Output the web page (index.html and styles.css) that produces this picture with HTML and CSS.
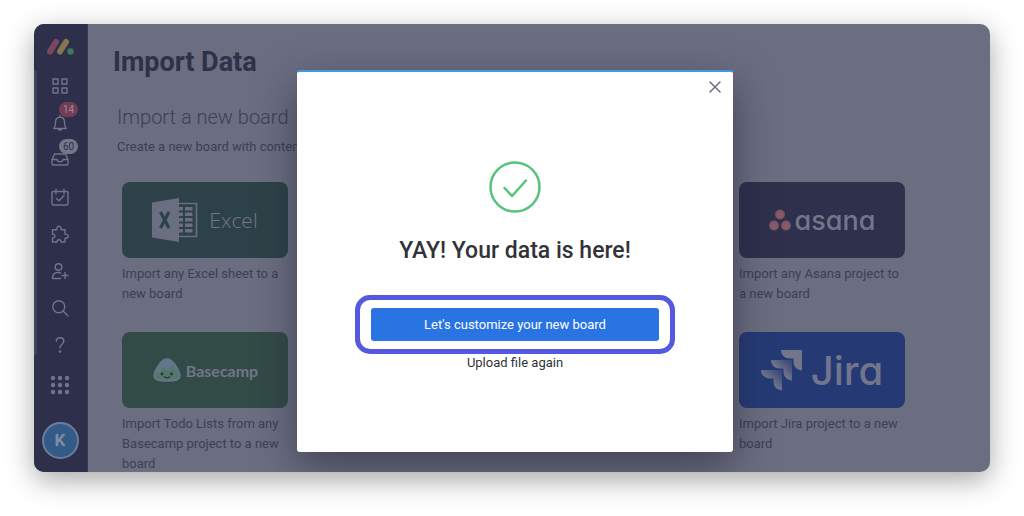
FILE: index.html
```html
<!DOCTYPE html>
<html lang="en">
<head>
    <meta charset="UTF-8">
    <meta name="viewport" content="width=device-width, initial-scale=1.0">
    <title>Import Data</title>
    <link rel="stylesheet" href="styles.css">
</head>
<body>
    <div class="app">
        <nav class="sidebar">
            <a href="#" class="logo" aria-label="Home">
                <svg width="28" height="18" viewBox="0 0 28 18" stroke-width="6" stroke-linecap="round">
                    <path d="M4 13.500L10 4" stroke="#7d4660"/>
                    <path d="M14 13.500L20 4" stroke="#85764f"/>
                    <circle cx="24.500" cy="13.500" r="3.200" fill="#3f7a5c"/>
                </svg>
            </a>
            <a href="#" class="nav-item" aria-label="Workspaces">
                <svg class="icon" viewBox="0 0 18 18"><path d="M2 2h5v5H2zM11 2h5v5h-5zM2 11h5v5H2zM11 11h5v5h-5z"/></svg>
            </a>
            <a href="#" class="nav-item" aria-label="Notifications">
                <svg class="icon" viewBox="0 0 18 18"><path d="M2.800 14.500h12.400c-1.500-1.600-1.700-3-1.700-6.200C13.500 5 11.800 3.200 9 3.200S4.500 5 4.500 8.300c0 3.200-.2 4.600-1.700 6.200zM9 3V1.500M7.300 15c.3 1.700 3.100 1.700 3.400 0"/></svg>
                <span class="badge badge-red">14</span>
            </a>
            <a href="#" class="nav-item" aria-label="Inbox">
                <svg class="icon" viewBox="0 0 18 18"><path d="M1 8.500L3.500 3h11L17 8.500v4q0 1.500-1.500 1.500h-13Q1 14 1 12.500zM1 8.500h5c.3 3 5.700 3 6 0h5"/></svg>
                <span class="badge badge-grey">60</span>
            </a>
            <a href="#" class="nav-item" aria-label="My week">
                <svg class="icon" viewBox="0 0 18 18"><path d="M2.500 3.500h13q1.500 0 1.500 1.500v10.500q0 1.500-1.500 1.500h-13Q1 17 1 15.500V5q0-1.500 1.500-1.500zM5 1.200v4.500M13 1.200v4.500M5.500 10.500l2.500 2.300 5-5.300"/></svg>
            </a>
            <a href="#" class="nav-item" aria-label="Apps">
                <svg class="icon" viewBox="0 0 18 18"><path d="M1.500 4.800h4.300C5.300 0 10.700 0 10.200 4.800H14v4.400c4.400-.4 4.400 4.400 0 4v3.800h-3.800c.2-3-4.200-3-4.300 0H1.500v-4c3.300.2 3.300-4.100 0-3.800z"/></svg>
            </a>
            <a href="#" class="nav-item" aria-label="Invite">
                <svg class="icon" viewBox="0 0 18 18"><circle cx="7.500" cy="5" r="3.300"/><path d="M9.500 16.500H1.500c0-4.500 2.500-6 5.500-6 1.300 0 2.100.2 2.800.6M14 10.500v6M11 13.500h6"/></svg>
            </a>
            <a href="#" class="nav-item" aria-label="Search">
                <svg class="icon" viewBox="0 0 18 18"><circle cx="7.800" cy="7.800" r="6"/><path d="M12.300 12.300l4.500 4.500"/></svg>
            </a>
            <a href="#" class="nav-item" aria-label="Help">
                <svg class="icon" viewBox="0 0 18 18"><path d="M5.300 5.200C5.300 2.800 7 1.700 9 1.700s3.800 1.300 3.800 3.400c0 3-3.800 3.300-3.800 6.700"/><circle cx="9" cy="15.500" r=".6"/></svg>
            </a>
            <a href="#" class="nav-item products" aria-label="Products">
                <svg width="20" height="20" viewBox="0 0 20 20" fill="#72748a">
                    <circle cx="3" cy="3" r="2.200"/><circle cx="10" cy="3" r="2.200"/><circle cx="17" cy="3" r="2.200"/>
                    <circle cx="3" cy="10" r="2.200"/><circle cx="10" cy="10" r="2.200"/><circle cx="17" cy="10" r="2.200"/>
                    <circle cx="3" cy="17" r="2.200"/><circle cx="10" cy="17" r="2.200"/><circle cx="17" cy="17" r="2.200"/>
                </svg>
            </a>
            <a href="#" class="avatar">K</a>
        </nav>

        <main class="content">
            <h1>Import Data</h1>
            <h2>Import a new board</h2>
            <p class="intro">Create a new board with content</p>

            <div class="sources">
                <a href="#" class="source">
                    <div class="tile excel">
                        <svg width="46" height="44" viewBox="0 0 46 44">
                            <path d="M27 5.500h17.500v33H27" fill="none" stroke="#6b6d80" stroke-width="1.600"/>
                            <path d="M27 9h4v3.500h-4zM33 9h7.500v3.500H33zM27 14.500h4V18h-4zM33 14.500h7.500V18H33zM27 20h4v3.500h-4zM33 20h7.500v3.500H33zM27 25.500h4V29h-4zM33 25.500h7.500V29H33zM27 31h4v3.500h-4zM33 31h7.500v3.500H33z" fill="#6b6d80"/>
                            <path d="M0 4.500L27 0v44L0 39.500z" fill="#6b6d80"/>
                            <path d="M8.500 14l8.500 16M17 14L8.500 30" fill="none" stroke="#2d4248" stroke-width="3.200"/>
                        </svg>
                        <span>Excel</span>
                    </div>
                    <p>Import any Excel sheet to a new board</p>
                </a>
                <a href="#" class="source">
                    <div class="tile asana">
                        <svg width="22" height="22" viewBox="0 0 22 22">
                            <defs>
                                <radialGradient id="dot" cx=".5" cy=".6" r=".6">
                                    <stop offset="0" stop-color="#866060"/>
                                    <stop offset="1" stop-color="#80506c"/>
                                </radialGradient>
                            </defs>
                            <g fill="url(#dot)"><circle cx="11" cy="5.500" r="4.900"/><circle cx="5" cy="16.500" r="4.900"/><circle cx="17" cy="16.500" r="4.900"/></g>
                        </svg>
                        <span>asana</span>
                    </div>
                    <p>Import any Asana project to a new board</p>
                </a>
                <a href="#" class="source">
                    <div class="tile basecamp">
                        <svg width="30" height="24" viewBox="0 0 30 24">
                            <path d="M15 1.200C20 1.200 25.500 9 27.600 16.500 29 22 22 22.800 15 22.800S1 22 2.400 16.500C4.500 9 10 1.200 15 1.200z" fill="#537768" stroke="#65768a" stroke-width="2"/>
                            <path d="M3 14C5 8 10 2 15 2c4 0 9 6 11 12l-5.500-7-5 5.500L12 9l-5 6-2.500-1.500z" fill="#65768a"/>
                            <circle cx="10" cy="16" r="1.400" fill="#273342"/><circle cx="19.500" cy="16" r="1.400" fill="#273342"/>
                            <path d="M12 18.200c1 2.200 5 2.200 6 0" fill="none" stroke="#273342" stroke-width="1.200"/>
                        </svg>
                        <span>Basecamp</span>
                    </div>
                    <p>Import Todo Lists from any Basecamp project to a new board</p>
                </a>
                <a href="#" class="source">
                    <div class="tile jira">
                        <svg width="42" height="42" viewBox="0 0 42 42">
                            <defs>
                                <linearGradient id="fold" x1="1" y1="0" x2=".3" y2=".7">
                                    <stop offset=".2" stop-color="#3d4d7a"/>
                                    <stop offset=".8" stop-color="#73768a"/>
                                </linearGradient>
                            </defs>
                            <path d="M20 1h20q1 0 1 1v19.500c-5-.5-8.500-4-8.500-9v-3h-3.500c-5 0-9-3.500-9-8.500z" fill="#73768a"/>
                            <path d="M10 11h19q2 0 2 1v19.500c-5-.5-8.500-4-8.500-9v-3H19c-5 0-9-3.500-9-8.500z" fill="url(#fold)"/>
                            <path d="M0 21h19q2 0 2 1v19.500c-5-.5-8.500-4-8.500-9v-3H9c-5 0-9-3.500-9-8.500z" fill="url(#fold)"/>
                        </svg>
                        <span>Jira</span>
                    </div>
                    <p>Import Jira project to a new board</p>
                </a>
            </div>
        </main>

        <div class="overlay">
            <div class="modal" role="dialog" aria-labelledby="modal-title">
                <button class="close" aria-label="Close">
                    <svg width="12" height="12" viewBox="0 0 12 12"><path d="M1 1l10 10M11 1L1 11" stroke="#6b6d80" stroke-width="1.500" stroke-linecap="round"/></svg>
                </button>
                <svg class="success" width="52" height="52" viewBox="0 0 52 52">
                    <circle cx="26" cy="26" r="24.500"/>
                    <path d="M15.500 27l7.500 8L37 19.500"/>
                </svg>
                <h3 id="modal-title">YAY! Your data is here!</h3>
                <div class="highlight">
                    <button class="primary">Let's customize your new board</button>
                </div>
                <a href="#" class="again">Upload file again</a>
            </div>
        </div>
    </div>
</body>
</html>
```

FILE: styles.css
```css
* {
    margin: 0;
    padding: 0;
    box-sizing: border-box;
}
body {
    background: #fff;
    padding: 24px 34px 44px;
    font-family: Roboto, "Liberation Sans", sans-serif;
    font-size: 13px;
    line-height: 20px;
}
a {
    color: inherit;
    text-decoration: none;
}
.app {
    position: relative;
    display: flex;
    height: calc(100vh - 68px);
    border-radius: 10px;
    overflow: hidden;
    background: #6b6d80;
    box-shadow: 0 8px 28px rgba(0, 0, 0, 0.35);
}

/* sidebar */
.sidebar {
    position: relative;
    flex: 0 0 54px;
    display: flex;
    flex-direction: column;
    align-items: center;
    background: #2d2f4b;
    border-right: 1px solid #3a3c57;
    padding: 14px 1px 0 0;
}
.sidebar::before {
    content: "";
    position: absolute;
    left: 0;
    top: 46px;
    width: 3px;
    height: 285px;
    background: #404260;
    border-radius: 0 2px 2px 0;
}
.logo {
    height: 29px;
}
.logo svg,
.nav-item svg {
    display: block;
}
.nav-item {
    position: relative;
    display: flex;
    align-items: center;
    height: 37px;
}
.products {
    height: 44px;
}
.icon {
    width: 18px;
    height: 18px;
    fill: none;
    stroke: #72748a;
    stroke-width: 1.4;
    stroke-linecap: round;
    stroke-linejoin: round;
}
.badge {
    position: absolute;
    left: 8px;
    top: -2px;
    height: 15px;
    padding: 0 4px;
    border-radius: 8px;
    font-size: 10px;
    line-height: 15px;
}
.badge-red {
    background: #753d55;
    color: #9a8a9c;
}
.badge-grey {
    background: #74768a;
    color: #2d2f4b;
}
.avatar {
    width: 37px;
    height: 37px;
    margin-top: 15px;
    border: 2px solid #6b7d98;
    border-radius: 50%;
    background: #345a87;
    color: #7d8ca8;
    font-size: 17px;
    font-weight: 700;
    line-height: 33px;
    text-align: center;
}

/* page */
.content {
    flex: 1;
    padding: 22px 85px 0 34px;
    color: #3d3f57;
}
h1 {
    margin-left: -9px;
    font-size: 27px;
    font-weight: 700;
    line-height: 32px;
    color: #2f3149;
}
h2 {
    margin: 27px 0 0 -5px;
    font-size: 20px;
    font-weight: 300;
    line-height: 24px;
}
.intro {
    margin: 8px 0 25px -5px;
}
.sources {
    display: grid;
    grid-template-columns: 166px 166px;
    justify-content: space-between;
    gap: 28px;
}
.tile {
    display: flex;
    align-items: center;
    justify-content: center;
    height: 76px;
    margin-bottom: 6px;
    border-radius: 8px;
    color: #73768a;
}
.excel {
    gap: 11px;
    background: #2d4248;
    font: 300 21px "Open Sans", sans-serif;
}
.asana {
    gap: 4px;
    background: #2e304c;
    font: 500 27px Inter, sans-serif;
}
.basecamp {
    gap: 4px;
    background: #324b47;
    font: 700 16px Lato, sans-serif;
}
.jira {
    gap: 8px;
    background: #253a75;
    font: 500 40px Inter, sans-serif;
}
/* single-storey a */
.asana,
.jira {
    font-feature-settings: "cv11";
}

/* dialog */
.overlay {
    position: absolute;
    inset: 0;
    display: flex;
    justify-content: center;
    align-items: flex-start;
    padding: 46px 0 0 6px;
}
.modal {
    position: relative;
    display: flex;
    flex-direction: column;
    align-items: center;
    width: 436px;
    padding: 89px 0 80px;
    border-top: 2px solid #3d9be0;
    border-radius: 3px;
    background: #fff;
    color: #323338;
    box-shadow: 0 14px 40px rgba(30, 30, 50, 0.55);
}
.close {
    position: absolute;
    top: 9px;
    right: 12px;
    display: flex;
    border: none;
    background: none;
    cursor: pointer;
}
.success {
    fill: none;
    stroke: #56c47c;
    stroke-width: 2.5;
    stroke-linecap: round;
    stroke-linejoin: round;
}
h3 {
    margin: 22px 0 28px;
    font-size: 23px;
    font-weight: 500;
    line-height: 32px;
}
.highlight {
    padding: 8px 11px;
    border: 5px solid #5559df;
    border-radius: 15px;
}
.primary {
    display: block;
    width: 288px;
    height: 33px;
    border: none;
    border-radius: 3px;
    background: #2974e2;
    color: #fff;
    font: inherit;
    cursor: pointer;
}
.again {
    line-height: 18px;
}
```
